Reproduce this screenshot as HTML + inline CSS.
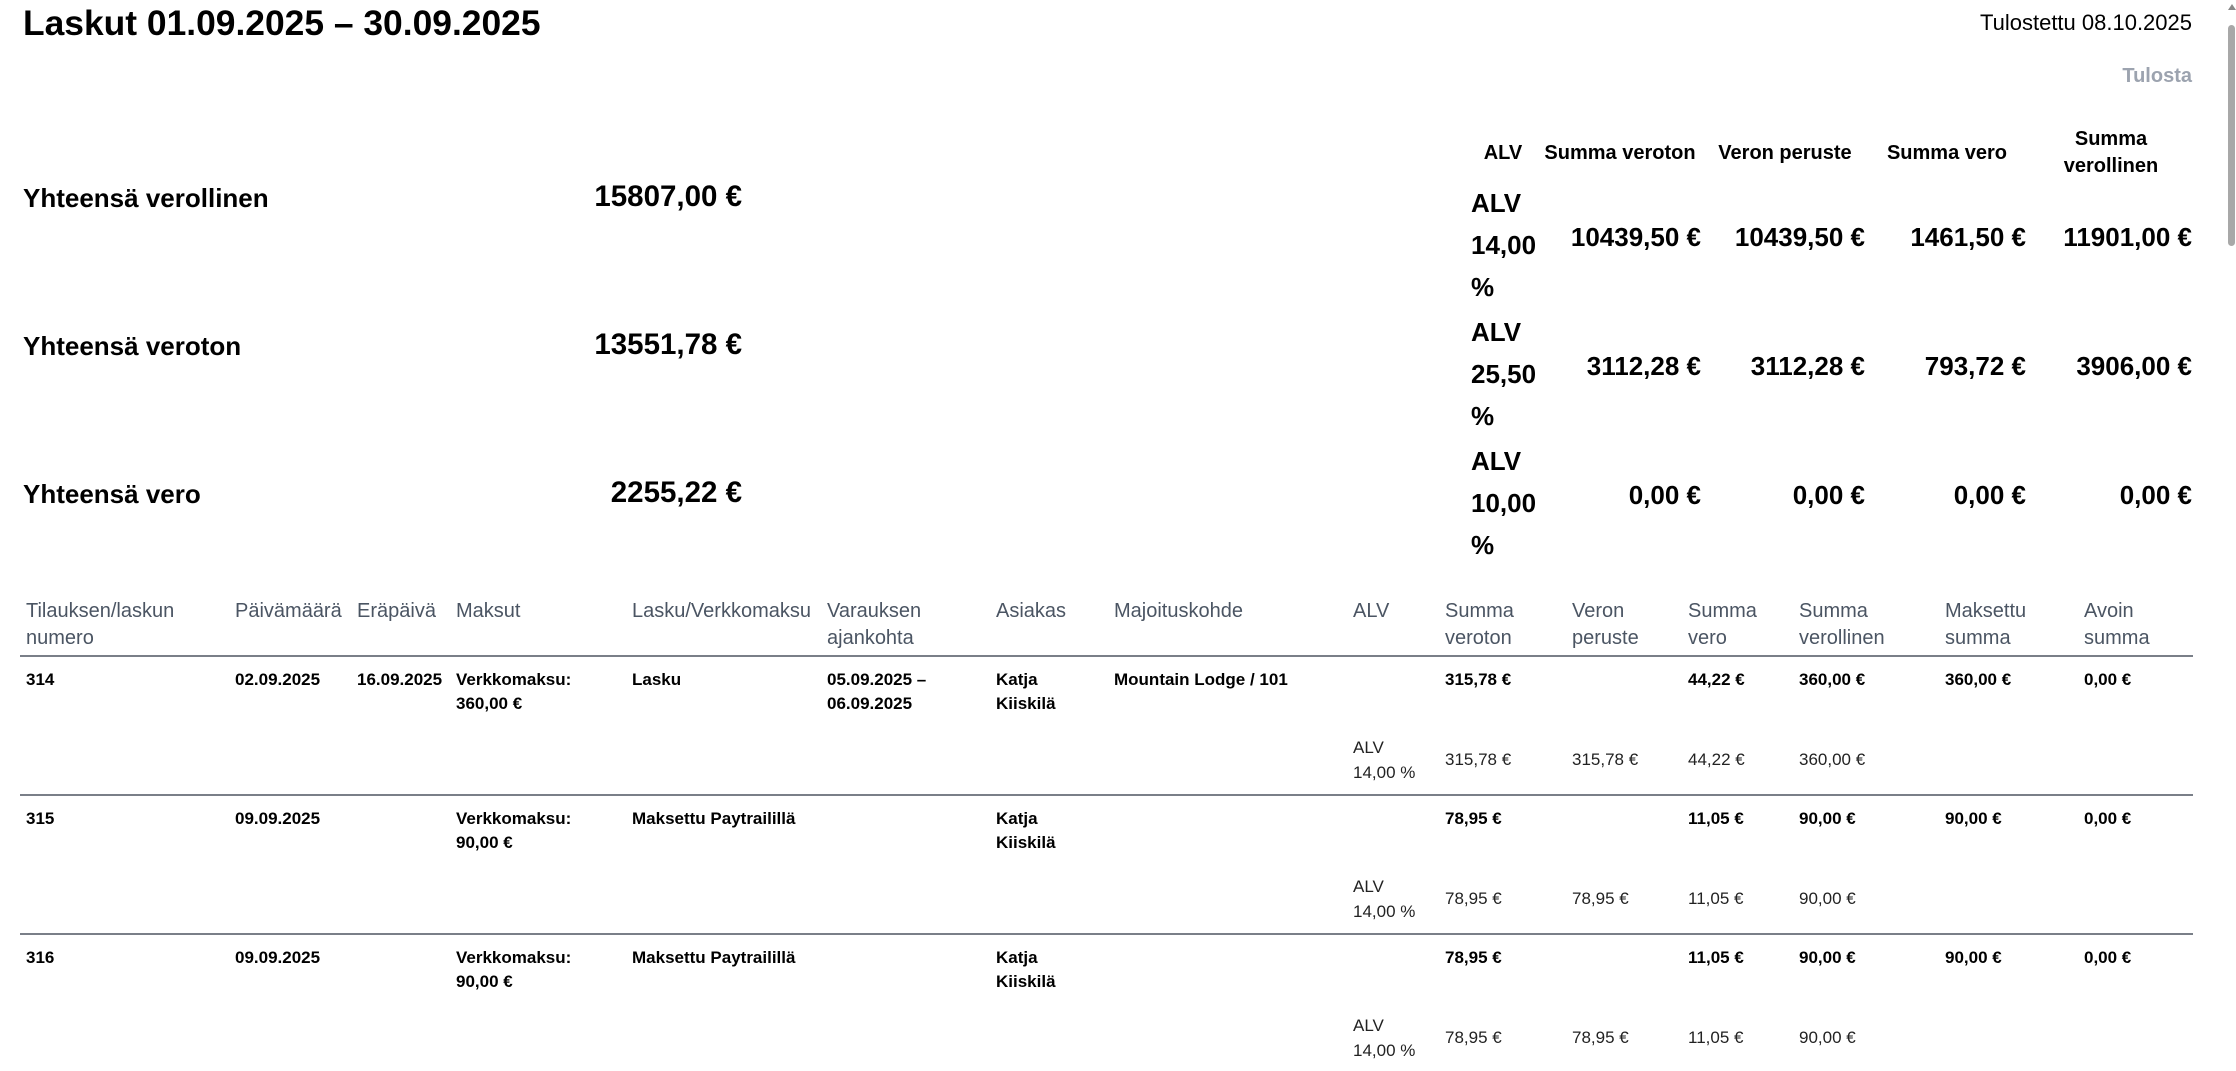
<!DOCTYPE html>
<html><head><meta charset="utf-8">
<style>
html,body{margin:0;padding:0;background:#fff;}
body{width:2236px;height:1071px;overflow:hidden;position:relative;font-family:"Liberation Sans",Arial,sans-serif;color:#000;}
.a{position:absolute;white-space:nowrap;line-height:1;}
.b{font-weight:bold;}
.h{position:absolute;font-size:20px;line-height:27px;color:#4b5563;}
.c{position:absolute;font-size:17px;line-height:24px;font-weight:bold;white-space:nowrap;}
.s{position:absolute;font-size:17px;line-height:25px;color:#222;white-space:nowrap;}
.rt{position:absolute;font-size:26px;font-weight:bold;line-height:1;white-space:nowrap;}
.th{position:absolute;width:200px;text-align:center;font-size:20px;font-weight:bold;line-height:27px;}
.line{position:absolute;left:20px;width:2173px;height:2px;background:#7a7f88;}
</style></head><body>

<div class="a b" style="left:23px;top:6px;font-size:35.4px;">Laskut 01.09.2025 – 30.09.2025</div>
<div class="a" style="right:44px;top:12px;font-size:22px;">Tulostettu 08.10.2025</div>
<div class="a b" style="right:44px;top:66px;font-size:20px;color:#9ca3af;">Tulosta</div>

<div class="a b" style="left:23px;top:185px;font-size:26px;">Yhteensä verollinen</div>
<div class="a b" style="left:23px;top:333px;font-size:26px;">Yhteensä veroton</div>
<div class="a b" style="left:23px;top:481px;font-size:26px;">Yhteensä vero</div>
<div class="a b" style="right:1494px;top:182px;font-size:29.5px;">15807,00 €</div>
<div class="a b" style="right:1494px;top:330px;font-size:29.5px;">13551,78 €</div>
<div class="a b" style="right:1494px;top:478px;font-size:29.5px;">2255,22 €</div>

<div class="th" style="left:1403px;top:140px;">ALV</div>
<div class="th" style="left:1520px;top:140px;">Summa veroton</div>
<div class="th" style="left:1685px;top:140px;">Veron peruste</div>
<div class="th" style="left:1847px;top:140px;">Summa vero</div>
<div class="th" style="left:2011px;top:126px;">Summa<br>verollinen</div>

<div class="rt" style="left:1471px;top:182px;line-height:42px;">ALV<br>14,00<br>%</div>
<div class="rt" style="right:535px;top:224px;">10439,50 €</div>
<div class="rt" style="right:371px;top:224px;">10439,50 €</div>
<div class="rt" style="right:210px;top:224px;">1461,50 €</div>
<div class="rt" style="right:44px;top:224px;">11901,00 €</div>

<div class="rt" style="left:1471px;top:311px;line-height:42px;">ALV<br>25,50<br>%</div>
<div class="rt" style="right:535px;top:353px;">3112,28 €</div>
<div class="rt" style="right:371px;top:353px;">3112,28 €</div>
<div class="rt" style="right:210px;top:353px;">793,72 €</div>
<div class="rt" style="right:44px;top:353px;">3906,00 €</div>

<div class="rt" style="left:1471px;top:440px;line-height:42px;">ALV<br>10,00<br>%</div>
<div class="rt" style="right:535px;top:482px;">0,00 €</div>
<div class="rt" style="right:371px;top:482px;">0,00 €</div>
<div class="rt" style="right:210px;top:482px;">0,00 €</div>
<div class="rt" style="right:44px;top:482px;">0,00 €</div>

<!-- main table header -->
<div class="h" style="left:26px;top:598px;">Tilauksen/laskun<br>numero</div>
<div class="h" style="left:235px;top:598px;">Päivämäärä</div>
<div class="h" style="left:357px;top:598px;">Eräpäivä</div>
<div class="h" style="left:456px;top:598px;">Maksut</div>
<div class="h" style="left:632px;top:598px;">Lasku/Verkkomaksu</div>
<div class="h" style="left:827px;top:598px;">Varauksen<br>ajankohta</div>
<div class="h" style="left:996px;top:598px;">Asiakas</div>
<div class="h" style="left:1114px;top:598px;">Majoituskohde</div>
<div class="h" style="left:1353px;top:598px;">ALV</div>
<div class="h" style="left:1445px;top:598px;">Summa<br>veroton</div>
<div class="h" style="left:1572px;top:598px;">Veron<br>peruste</div>
<div class="h" style="left:1688px;top:598px;">Summa<br>vero</div>
<div class="h" style="left:1799px;top:598px;">Summa<br>verollinen</div>
<div class="h" style="left:1945px;top:598px;">Maksettu<br>summa</div>
<div class="h" style="left:2084px;top:598px;">Avoin<br>summa</div>
<div class="line" style="top:655px;"></div>

<!-- row 314 -->
<div class="c" style="left:26px;top:668px;">314</div>
<div class="c" style="left:235px;top:668px;">02.09.2025</div>
<div class="c" style="left:357px;top:668px;">16.09.2025</div>
<div class="c" style="left:456px;top:668px;">Verkkomaksu:<br>360,00 €</div>
<div class="c" style="left:632px;top:668px;">Lasku</div>
<div class="c" style="left:827px;top:668px;">05.09.2025 –<br>06.09.2025</div>
<div class="c" style="left:996px;top:668px;">Katja<br>Kiiskilä</div>
<div class="c" style="left:1114px;top:668px;">Mountain Lodge / 101</div>
<div class="c" style="left:1445px;top:668px;">315,78 €</div>
<div class="c" style="left:1688px;top:668px;">44,22 €</div>
<div class="c" style="left:1799px;top:668px;">360,00 €</div>
<div class="c" style="left:1945px;top:668px;">360,00 €</div>
<div class="c" style="left:2084px;top:668px;">0,00 €</div>
<div class="s" style="left:1353px;top:735px;">ALV<br>14,00 %</div>
<div class="s" style="left:1445px;top:747px;">315,78 €</div>
<div class="s" style="left:1572px;top:747px;">315,78 €</div>
<div class="s" style="left:1688px;top:747px;">44,22 €</div>
<div class="s" style="left:1799px;top:747px;">360,00 €</div>
<div class="line" style="top:794px;"></div>

<!-- row 315 -->
<div class="c" style="left:26px;top:807px;">315</div>
<div class="c" style="left:235px;top:807px;">09.09.2025</div>
<div class="c" style="left:456px;top:807px;">Verkkomaksu:<br>90,00 €</div>
<div class="c" style="left:632px;top:807px;">Maksettu Paytrailillä</div>
<div class="c" style="left:996px;top:807px;">Katja<br>Kiiskilä</div>
<div class="c" style="left:1445px;top:807px;">78,95 €</div>
<div class="c" style="left:1688px;top:807px;">11,05 €</div>
<div class="c" style="left:1799px;top:807px;">90,00 €</div>
<div class="c" style="left:1945px;top:807px;">90,00 €</div>
<div class="c" style="left:2084px;top:807px;">0,00 €</div>
<div class="s" style="left:1353px;top:874px;">ALV<br>14,00 %</div>
<div class="s" style="left:1445px;top:886px;">78,95 €</div>
<div class="s" style="left:1572px;top:886px;">78,95 €</div>
<div class="s" style="left:1688px;top:886px;">11,05 €</div>
<div class="s" style="left:1799px;top:886px;">90,00 €</div>
<div class="line" style="top:933px;"></div>

<!-- row 316 -->
<div class="c" style="left:26px;top:946px;">316</div>
<div class="c" style="left:235px;top:946px;">09.09.2025</div>
<div class="c" style="left:456px;top:946px;">Verkkomaksu:<br>90,00 €</div>
<div class="c" style="left:632px;top:946px;">Maksettu Paytrailillä</div>
<div class="c" style="left:996px;top:946px;">Katja<br>Kiiskilä</div>
<div class="c" style="left:1445px;top:946px;">78,95 €</div>
<div class="c" style="left:1688px;top:946px;">11,05 €</div>
<div class="c" style="left:1799px;top:946px;">90,00 €</div>
<div class="c" style="left:1945px;top:946px;">90,00 €</div>
<div class="c" style="left:2084px;top:946px;">0,00 €</div>
<div class="s" style="left:1353px;top:1013px;">ALV<br>14,00 %</div>
<div class="s" style="left:1445px;top:1025px;">78,95 €</div>
<div class="s" style="left:1572px;top:1025px;">78,95 €</div>
<div class="s" style="left:1688px;top:1025px;">11,05 €</div>
<div class="s" style="left:1799px;top:1025px;">90,00 €</div>

<!-- scrollbar -->
<div style="position:absolute;left:2228px;top:4px;width:0;height:0;border-left:4px solid transparent;border-right:4px solid transparent;border-bottom:6px solid #888;"></div>
<div style="position:absolute;left:2228px;top:25px;width:7px;height:221px;border-radius:4px;background:#a8a8a8;"></div>
</body></html>
